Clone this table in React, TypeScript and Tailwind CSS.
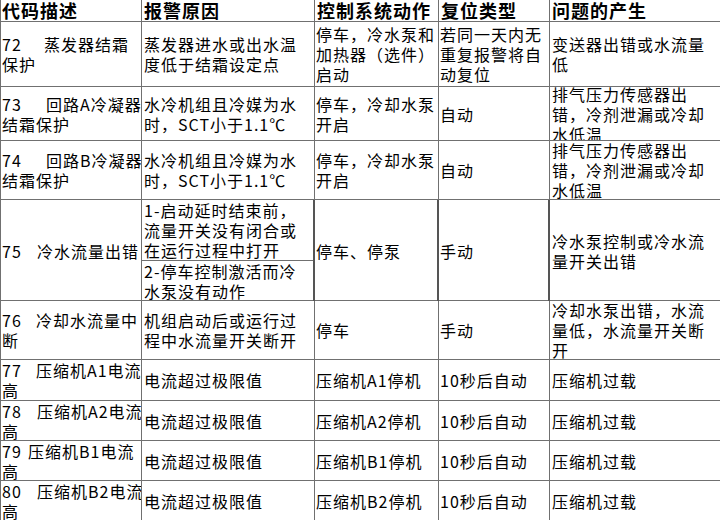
import type { ReactNode } from "react";

const font = "font-['Noto_Sans_CJK_SC','Noto_Sans_CJK_JP',sans-serif]";

function Cell({
  children,
  pad = "pl-[2px]",
  edge = "border-r border-[#707070]",
}: {
  children: ReactNode;
  pad?: string;
  edge?: string;
}) {
  return (
    <div className={`flex items-center overflow-hidden ${edge} ${pad}`}>
      <div className="leading-[20px] whitespace-nowrap">{children}</div>
    </div>
  );
}

function Row({ h, cells }: { h: string; cells: ReactNode[] }) {
  const pads = ["pl-[1px]", "pl-[2px]", "pl-[1px]", "pl-[1px]", "pl-[2px]"];
  return (
    <div
      className={`grid grid-cols-[141px_173px_124px_111px_1fr] border-b border-[#707070] ${h}`}
    >
      {cells.map((c, i) => (
        <Cell key={i} pad={pads[i]} edge={i === 4 ? "" : "border-r border-[#707070]"}>
          {c}
        </Cell>
      ))}
    </div>
  );
}

function Code({ n, w, first, rest }: { n: string; w: string; first: string; rest?: string }) {
  return (
    <>
      <span className={`inline-block ${w}`}>{n}</span>
      {first}
      {rest && (
        <>
          <br />
          {rest}
        </>
      )}
    </>
  );
}

const lines = (...t: string[]) =>
  t.map((s, i) => (
    <span key={i}>
      {i > 0 && <br />}
      {s}
    </span>
  ));

export default function App() {
  return (
    <div
      className={`w-[720px] h-[520px] overflow-hidden bg-white text-black text-[16px] tracking-[1px] ${font}`}
    >
      <div className="border-l border-[#707070]">
        <div className="grid grid-cols-[141px_173px_124px_111px_1fr] h-[22px] border-b border-[#707070] text-[18px] font-bold">
          <div className="flex items-center border-r border-[#707070] pl-[1px] leading-[21px]">代码描述</div>
          <div className="flex items-center border-r border-[#707070] pl-[2px] leading-[21px]">报警原因</div>
          <div className="flex items-center border-r border-[#707070] pl-[2px] leading-[21px]">控制系统动作</div>
          <div className="flex items-center border-r border-[#707070] pl-[2px] leading-[21px]">复位类型</div>
          <div className="flex items-center pl-[2px] leading-[21px]">问题的产生</div>
        </div>

        <Row
          h="h-[65px]"
          cells={[
            <Code n="72" w="w-[42px]" first="蒸发器结霜" rest="保护" />,
            lines("蒸发器进水或出水温", "度低于结霜设定点"),
            lines("停车，冷水泵和", "加热器（选件）", "启动"),
            lines("若同一天内无", "重复报警将自", "动复位"),
            lines("变送器出错或水流量", "低"),
          ]}
        />
        <Row
          h="h-[54px]"
          cells={[
            <Code n="73" w="w-[44px]" first="回路A冷凝器" rest="结霜保护" />,
            lines("水冷机组且冷媒为水", "时，SCT小于1.1℃"),
            lines("停车，冷却水泵", "开启"),
            "自动",
            lines("排气压力传感器出", "错，冷剂泄漏或冷却", "水低温"),
          ]}
        />
        <Row
          h="h-[59px]"
          cells={[
            <Code n="74" w="w-[44px]" first="回路B冷凝器" rest="结霜保护" />,
            lines("水冷机组且冷媒为水", "时，SCT小于1.1℃"),
            lines("停车，冷却水泵", "开启"),
            "自动",
            lines("排气压力传感器出", "错，冷剂泄漏或冷却", "水低温"),
          ]}
        />

        {/* 75 has the split reason cell and the heavier rules */}
        <div className="grid grid-cols-[141px_173px_124px_111px_1fr] h-[101px] border-b border-[#707070]">
          <Cell pad="pl-[1px]">
            <Code n="75" w="w-[35px]" first="冷水流量出错" />
          </Cell>
          <div className="flex flex-col border-r-2 border-[#555]">
            <div className="h-[61px] flex items-center border-b border-[#707070] pl-[2px] overflow-hidden">
              <div className="leading-[20px] whitespace-nowrap">
                {lines("1-启动延时结束前，", "流量开关没有闭合或", "在运行过程中打开")}
              </div>
            </div>
            <div className="flex-1 flex items-center pl-[2px] overflow-hidden">
              <div className="leading-[20px] whitespace-nowrap">
                {lines("2-停车控制激活而冷", "水泵没有动作")}
              </div>
            </div>
          </div>
          <Cell pad="pl-[1px]" edge="border-r-2 border-[#555]">
            停车、停泵
          </Cell>
          <Cell pad="pl-[1px]" edge="border-r-2 border-[#555]">
            手动
          </Cell>
          <Cell pad="pl-[2px]" edge="">
            {lines("冷水泵控制或冷水流", "量开关出错")}
          </Cell>
        </div>

        <Row
          h="h-[59px]"
          cells={[
            <Code n="76" w="w-[34px]" first="冷却水流量中" rest="断" />,
            lines("机组启动后或运行过", "程中水流量开关断开"),
            "停车",
            "手动",
            lines("冷却水泵出错，水流", "量低，水流量开关断", "开"),
          ]}
        />
        <Row
          h="h-[41px]"
          cells={[
            <Code n="77" w="w-[34px]" first="压缩机A1电流" rest="高" />,
            "电流超过极限值",
            "压缩机A1停机",
            "10秒后自动",
            "压缩机过载",
          ]}
        />
        <Row
          h="h-[40px]"
          cells={[
            <Code n="78" w="w-[35px]" first="压缩机A2电流" rest="高" />,
            "电流超过极限值",
            "压缩机A2停机",
            "10秒后自动",
            "压缩机过载",
          ]}
        />
        <Row
          h="h-[40px]"
          cells={[
            <Code n="79" w="w-[26px]" first="压缩机B1电流" rest="高" />,
            "电流超过极限值",
            "压缩机B1停机",
            "10秒后自动",
            "压缩机过载",
          ]}
        />
        <Row
          h="h-[41px]"
          cells={[
            <Code n="80" w="w-[35px]" first="压缩机B2电流" rest="高" />,
            "电流超过极限值",
            "压缩机B2停机",
            "10秒后自动",
            "压缩机过载",
          ]}
        />
      </div>
    </div>
  );
}
